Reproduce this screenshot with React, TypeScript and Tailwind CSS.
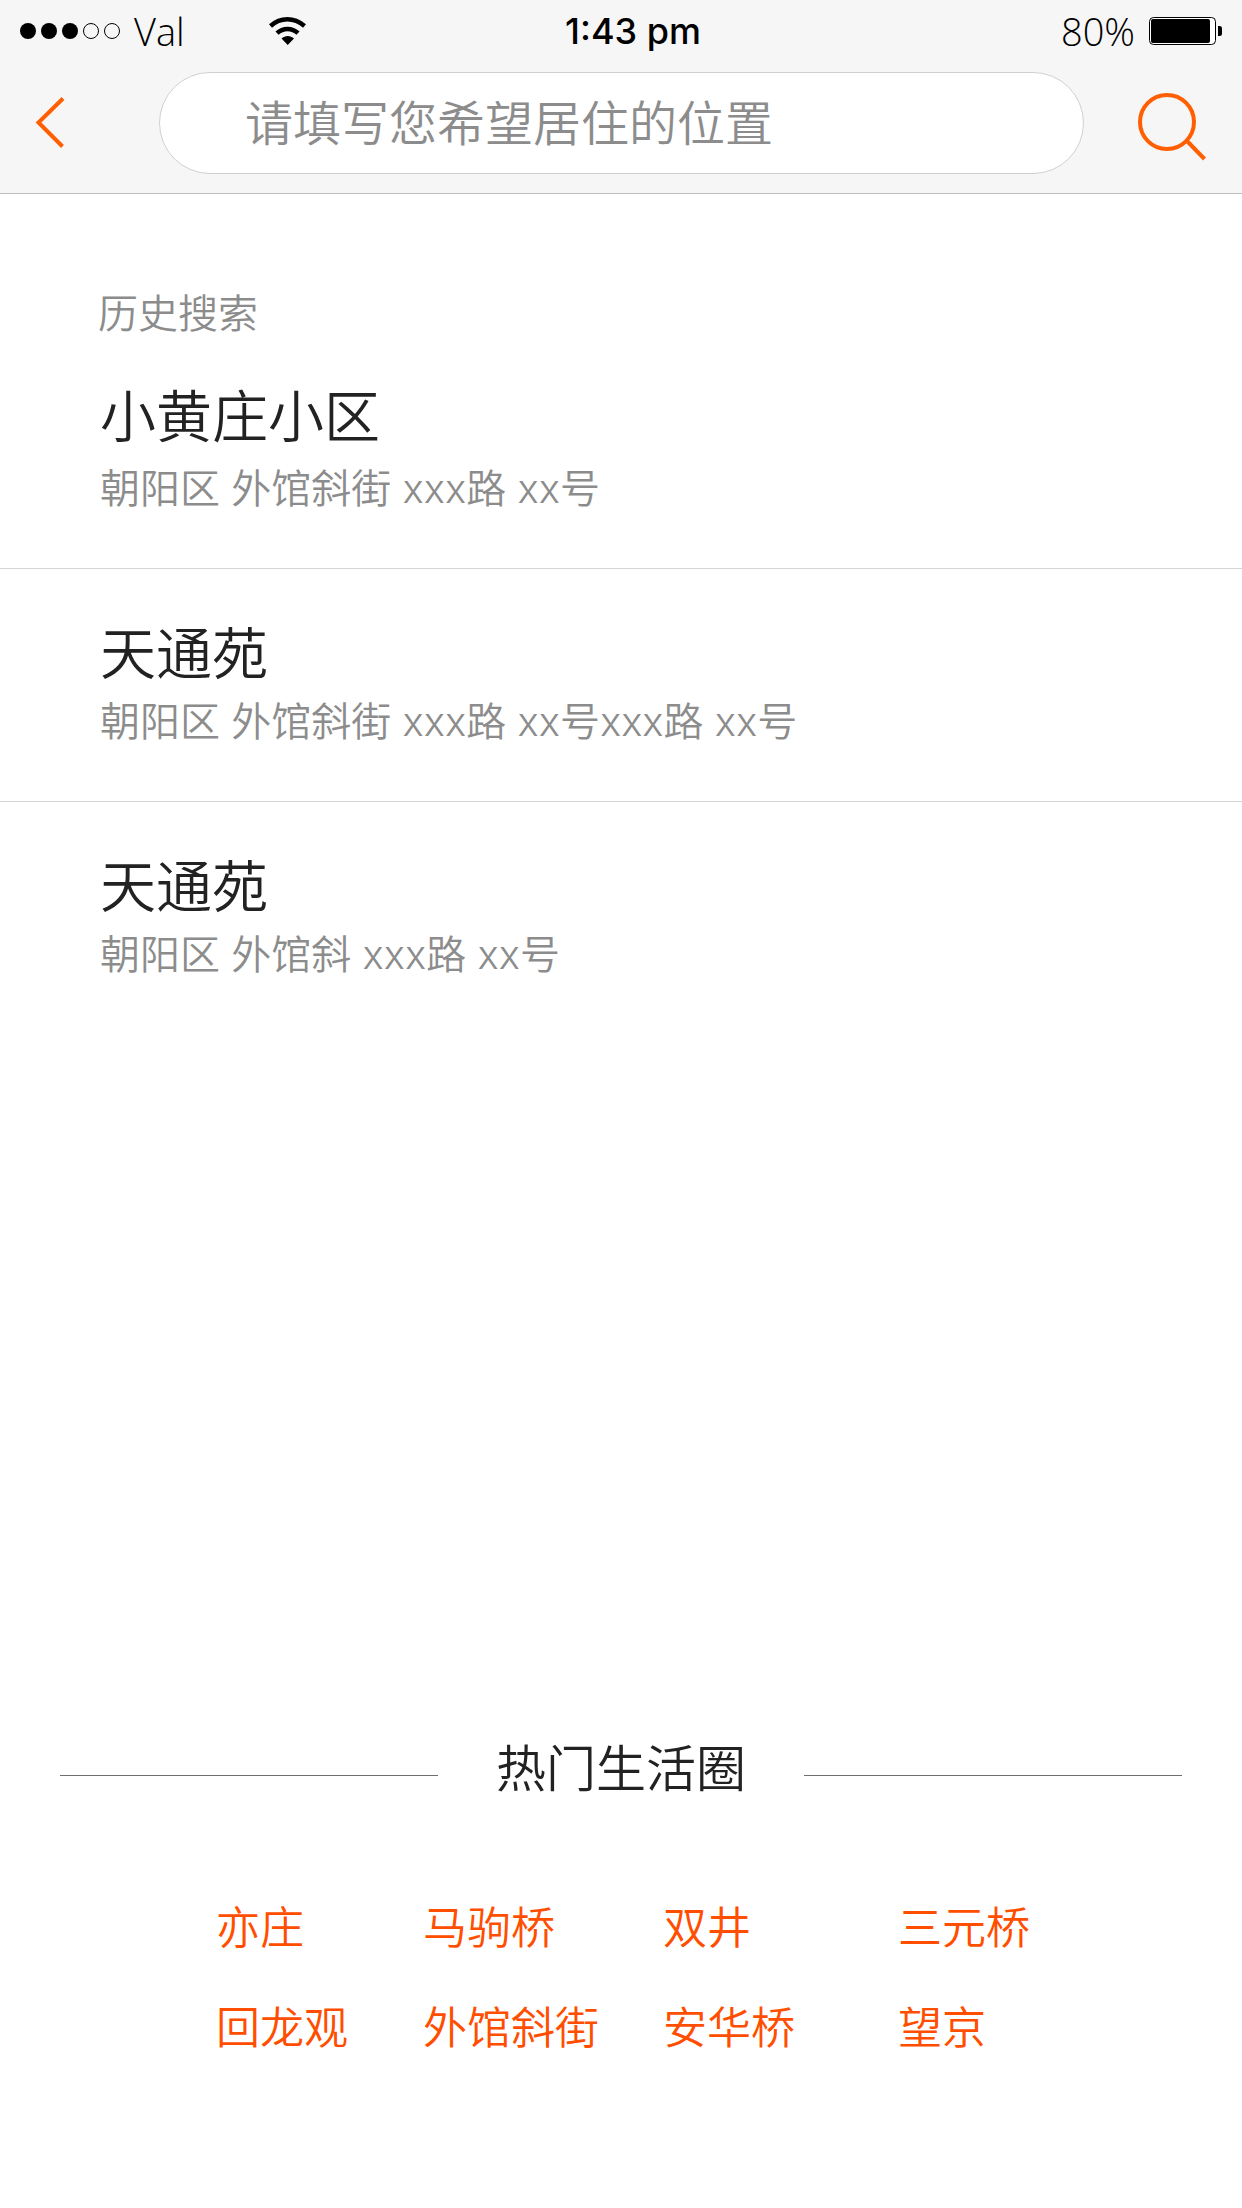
import React from 'react';

const history = [
  { name: '小黄庄小区', address: '朝阳区 外馆斜街 xxx路 xx号' },
  { name: '天通苑', address: '朝阳区 外馆斜街 xxx路 xx号xxx路 xx号' },
  { name: '天通苑', address: '朝阳区 外馆斜 xxx路 xx号' },
];

const hotAreas = ['亦庄', '马驹桥', '双井', '三元桥', '回龙观', '外馆斜街', '安华桥', '望京'];

export default function App() {
  return (
    <div className="flex min-h-screen flex-col bg-white font-['Inter','Noto_Sans_CJK_SC',sans-serif] font-[350] text-[#222222]">
      <header className="border-b border-[#bfbfbf] bg-[#f6f6f6]">
        <StatusBar />
        <SearchBar />
      </header>

      {/* Search history */}
      <main className="pt-[92px]">
        <h2 className="px-[98px] text-[40px] leading-[56px] text-[#8c8c8c]">历史搜索</h2>
        <ul className="divide-y divide-[#d5d5d5]">
          {history.map((item, index) => (
            <li key={index} className="group">
              <a
                href="#"
                className="flex flex-col px-[100px] pt-[45px] pb-[51px] group-first:gap-1 group-first:pt-[35px]"
              >
                <span className="text-[56px] leading-[80px]">{item.name}</span>
                <span className="text-[40px] leading-[56px] text-[#8c8c8c]">{item.address}</span>
              </a>
            </li>
          ))}
        </ul>
      </main>

      {/* Hot areas */}
      <section className="mt-auto pb-[150px]">
        <div className="flex items-center gap-[58px] px-[60px]">
          <div className="mt-3 h-px flex-1 bg-[#6e6e6e]" />
          <h2 className="text-[50px] leading-[72px]">热门生活圈</h2>
          <div className="mt-3 h-px flex-1 bg-[#6e6e6e]" />
        </div>
        <nav className="mt-[93px] grid grid-cols-[207fr_240fr_235fr_172fr] gap-y-10 pr-[172px] pl-[216px]">
          {hotAreas.map((area) => (
            <a key={area} href="#" className="text-[44px] leading-[60px] whitespace-nowrap text-[#ff4e00]">
              {area}
            </a>
          ))}
        </nav>
      </section>
    </div>
  );
}

function StatusBar() {
  return (
    <div className="grid h-[62px] grid-cols-[546fr_auto_522fr] items-center px-5 text-[38px] leading-[48px] text-black">
      <div className="flex items-center">
        <div className="flex gap-[5px]">
          <span className="size-4 rounded-full bg-black" />
          <span className="size-4 rounded-full bg-black" />
          <span className="size-4 rounded-full bg-black" />
          <span className="size-4 rounded-full border border-black" />
          <span className="size-4 rounded-full border border-black" />
        </div>
        <span className="ml-[14px] w-[135px] font-['Open_Sans',sans-serif] font-light">Val</span>
        <WifiIcon />
      </div>
      <span className="text-[36px] font-medium">1:43 pm</span>
      <div className="flex items-center justify-end gap-[14px]">
        <span className="font-['Open_Sans',sans-serif]">80%</span>
        <BatteryIcon />
      </div>
    </div>
  );
}

function SearchBar() {
  return (
    <form className="flex items-center pt-[10px] pb-[19px]" onSubmit={(e) => e.preventDefault()}>
      <button type="button" aria-label="返回" className="flex w-[159px] shrink-0 pl-[34px]">
        <svg width="32" height="52" viewBox="0 0 32 52" fill="none" stroke="#ff5f00" strokeWidth="4">
          <path d="M29 1.500 4.500 25.500 28.500 49.500" />
        </svg>
      </button>
      <input
        type="text"
        aria-label="位置"
        placeholder="请填写您希望居住的位置"
        className="h-[102px] min-w-0 flex-1 rounded-full border border-[#d0d0d0] bg-white px-[85px] text-[48px] placeholder:text-[#8c8c8c] placeholder:opacity-100"
      />
      <button type="submit" aria-label="搜索" className="flex w-[158px] shrink-0 justify-end pr-[34px]">
        <svg width="72" height="76" viewBox="0 0 72 76" fill="none" stroke="#ff5f00" strokeWidth="4">
          <circle cx="31" cy="37" r="27" />
          <path d="M51 56 68.500 74" />
        </svg>
      </button>
    </form>
  );
}

function WifiIcon() {
  return (
    <svg width="38" height="28" viewBox="0 0 38 28" fill="none" stroke="#000" strokeWidth="4.500">
      <path d="M1.500 9C11.500 0 25 0 35.500 9" />
      <path d="M8 16.200C14 10.500 23 10.500 29 16.200" />
      <path d="M12.500 21.500C16 18 21.500 18 25 21.500L18.700 28Z" fill="#000" stroke="none" />
    </svg>
  );
}

function BatteryIcon() {
  return (
    <svg width="73" height="30" viewBox="0 0 73 30">
      <rect x="0.500" y="1.500" width="66" height="27" rx="4" fill="#fff" stroke="#000" />
      <rect x="2" y="3" width="59" height="24" rx="2" fill="#000" />
      <path d="M69 10h1.500a2.500 2.500 0 0 1 2.500 2.500v5a2.500 2.500 0 0 1-2.500 2.500H69Z" fill="#000" />
    </svg>
  );
}
